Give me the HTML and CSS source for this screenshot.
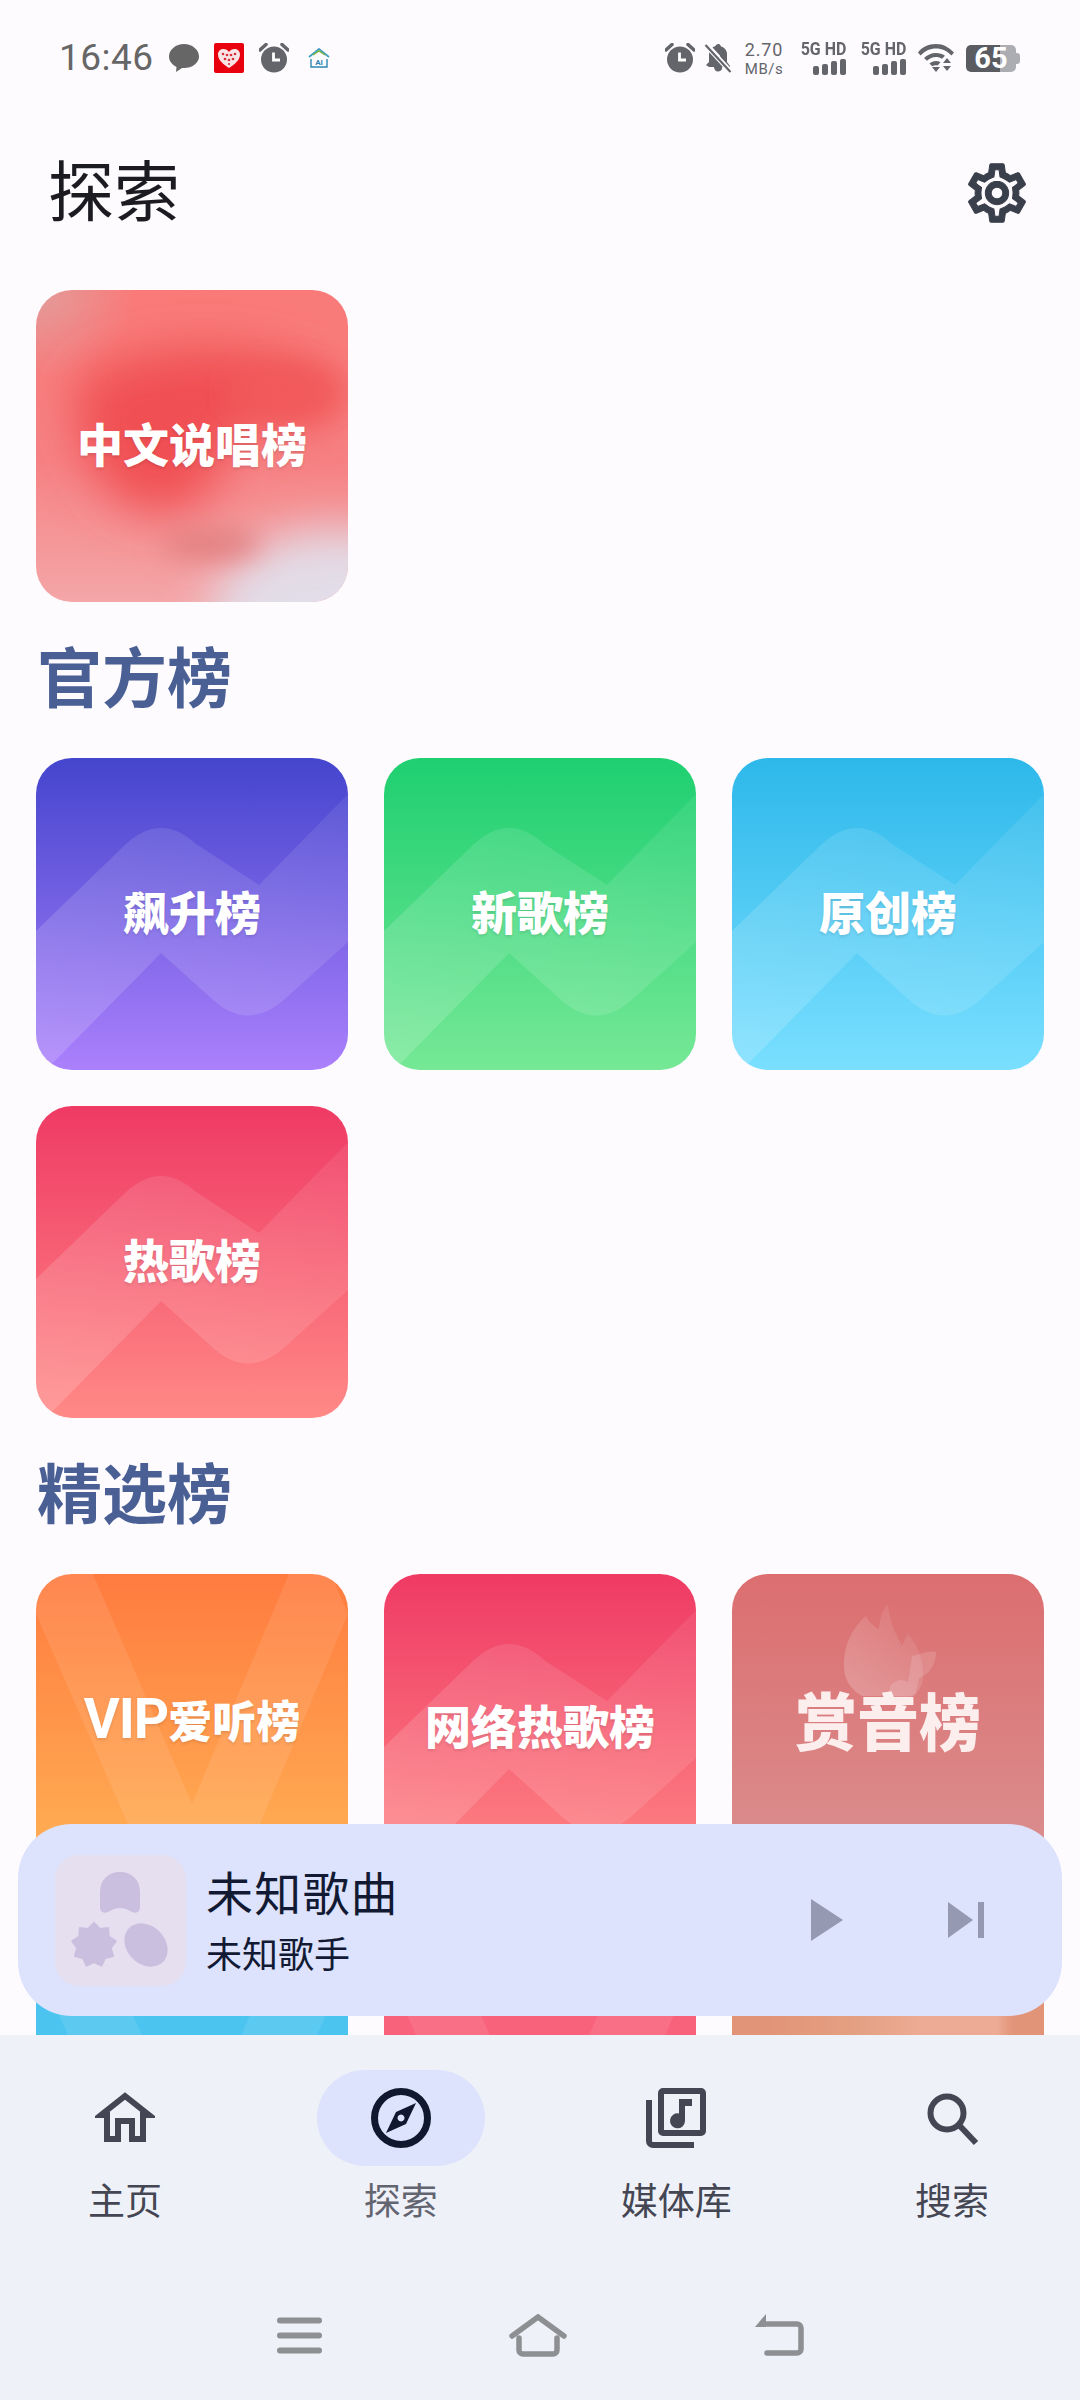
FILE: index.html
```html
<!DOCTYPE html>
<html lang="zh-CN">
<head>
  <meta charset="UTF-8" />
  <meta name="viewport" content="width=device-width, initial-scale=1.0"/>
  <title>探索</title>
  <link rel="stylesheet" href="styles.css">
</head>
<body>
  <svg class="sprite" aria-hidden="true">
    <defs>
      <linearGradient id="bandFade" x1="0" y1="1" x2="1" y2="0">
        <stop offset="0" stop-color="#fff" stop-opacity=".17"/>
        <stop offset="1" stop-color="#fff" stop-opacity=".07"/>
      </linearGradient>
      <linearGradient id="flameFade" x1="0" y1="1" x2="1" y2="0">
        <stop offset="0" stop-color="#fff" stop-opacity=".22"/>
        <stop offset="1" stop-color="#fff" stop-opacity=".04"/>
      </linearGradient>
      <filter id="soft" x="-30%" y="-30%" width="160%" height="160%">
        <feGaussianBlur stdDeviation="24"/>
      </filter>
      <filter id="softer" x="-30%" y="-30%" width="160%" height="160%">
        <feGaussianBlur stdDeviation="14"/>
      </filter>
      <symbol id="wave" viewBox="0 0 312 312">
        <path fill="url(#bandFade)" d="M0 173L90 86Q125 54 160 86L223 127L312 36V184L250 240Q212 275 175 240L125 195L10 312H0Z"/>
      </symbol>
      <symbol id="vee" viewBox="0 0 312 312">
        <path fill="#fff" fill-opacity=".09" d="M16 0H57L156 230L253 0H295L312 40L198 312H119L0 40V10Z"/>
      </symbol>
      <symbol id="alarm" viewBox="0 0 30 30">
        <circle cx="15" cy="16.500" r="13" fill="#63656a"/>
        <path d="M1 7L7 1.500M29 7L23 1.500" stroke="#63656a" stroke-width="3.500" stroke-linecap="round"/>
        <path d="M14.500 9.500V17H21" fill="none" stroke="#fff" stroke-width="2.800"/>
      </symbol>
    </defs>
  </svg>

  <div class="app">
    <header class="status">
      <div class="status-left">
        <span class="time">16:46</span>
        <svg class="ico-30" viewBox="0 0 30 30"><path fill="#666" d="M15 1C7 1 0 6.500 0 13.500c0 4.500 3 8.200 7.500 10.400L7 29l6-4c.7.100 1.300.100 2 .100 8 0 15-5 15-11.600C30 6.500 23 1 15 1z"/></svg>
        <svg class="ico-30" viewBox="0 0 30 30">
          <rect width="30" height="30" rx="2" fill="#e8000f"/>
          <path fill="#fbe4e6" d="M15 25C9 21 4 17 4 11.500 4 8 6.700 6 9.500 6c2.300 0 4.300 1 5.500 3 1.200-2 3.200-3 5.500-3C23.300 6 26 8 26 11.500 26 17 21 21 15 25z"/>
          <g fill="#d6303c"><circle cx="9" cy="11" r="1.300"/><circle cx="13" cy="12" r="1.300"/><circle cx="17" cy="12" r="1.300"/><circle cx="21" cy="11" r="1.300"/><circle cx="11" cy="16" r="1.300"/><circle cx="15" cy="17" r="1.300"/><circle cx="19" cy="16" r="1.300"/><circle cx="15" cy="21" r="1.100"/></g>
        </svg>
        <svg class="ico-30"><use href="#alarm"/></svg>
        <svg class="ico-home" viewBox="0 0 22 20">
          <path d="M1 9L11 1L21 9" fill="none" stroke="#3f9fc0" stroke-width="1.800"/>
          <path d="M5 7L11 3L17 7" fill="none" stroke="#7cb63f" stroke-width="1.500"/>
          <path d="M3 11V19H19V11" fill="none" stroke="#2d86b0" stroke-width="1.400"/>
          <text x="11" y="17" class="ai-text">AI</text>
        </svg>
      </div>
      <div class="status-right">
        <svg class="ico-30"><use href="#alarm"/></svg>
        <svg class="ico-bell" viewBox="0 0 28 30">
          <path fill="#63656a" d="M14 1c1.500 0 2.500 1 2.700 2.400C21 4.500 23 8 23 12v7l3 4v1H5L2 22l3-3v-7c0-1.200.200-2.300.6-3.300L20 24H10c0 2.500 1.800 4.500 4 4.500s4-1.500 4.200-3.500z"/>
          <path d="M2 2L26 28" stroke="#fefbff" stroke-width="5"/>
          <path d="M1.500 2L26.500 29" stroke="#63656a" stroke-width="2.200"/>
          <path fill="#63656a" d="M8.500 4.500C10 3.500 11.500 3 11.500 3 11.800 2 12.800 1 14 1c1.500 0 2.500 1 2.700 2.400C21 4.500 23 8 23 12v8z"/>
        </svg>
        <div class="speed"><span>2.70</span><small>MB/s</small></div>
        <div class="cell">
          <span class="cell-label">5G HD</span>
          <span class="bars"><i></i><i></i><i></i><i></i></span>
        </div>
        <div class="cell">
          <span class="cell-label">5G HD</span>
          <span class="bars"><i></i><i></i><i></i><i></i></span>
        </div>
        <svg class="ico-wifi" viewBox="0 0 37 30">
          <path fill="#63656a" d="M0 9.500C4 4 10 1 18 1s12 3 18 8.500l-2.500 3C29 8 24 5.500 18 5.500S7 8 2.500 12.500z"/>
          <path fill="#63656a" d="M6 15c3-3 7-5 12-5 3.600 0 6.500 1 9 2.800l-3 3c-1.800-1.200-3.800-1.800-6-1.800-3.500 0-6.500 1.300-9 3.800z"/>
          <path fill="#63656a" d="M11.500 20.500c1.800-1.500 4-2.500 6.500-2.500 1.700 0 3.200.400 4.500 1.200l-3 3.300c-1.800-.6-3.800-.3-5.300.8z"/>
          <path fill="#63656a" d="M14 24h8l-4 5zM29 15l4 5h-8zM25 23h8l-4 5z"/>
        </svg>
        <div class="battery"><span>65</span></div>
      </div>
    </header>

    <div class="topbar">
      <h1>探索</h1>
      <svg class="gear" viewBox="0 0 24 24"><path fill="#3a3f4c" stroke="#3a3f4c" stroke-width=".35" d="M19.430 12.980c.04-.32.07-.64.07-.98 0-.34-.03-.66-.07-.98l2.110-1.650c.19-.15.24-.42.12-.64l-2-3.460c-.09-.16-.26-.25-.44-.25-.06 0-.12.01-.17.03l-2.490 1c-.52-.4-1.080-.73-1.690-.98l-.38-2.650C14.460 2.180 14.250 2 14 2h-4c-.25 0-.46.18-.49.42l-.38 2.650c-.61.25-1.170.59-1.690.98l-2.490-1c-.06-.02-.12-.03-.18-.03-.17 0-.34.09-.43.25l-2 3.460c-.13.22-.07.49.12.64l2.110 1.650c-.04.32-.07.65-.07.98 0 .33.03.66.07.98l-2.110 1.650c-.19.15-.24.42-.12.64l2 3.460c.09.16.26.25.44.25.06 0 .12-.01.17-.03l2.490-1c.52.4 1.080.73 1.690.98l.38 2.650c.03.24.24.42.49.42h4c.25 0 .46-.18.49-.42l.38-2.650c.61-.25 1.170-.59 1.690-.98l2.490 1c.06.02.12.03.18.03.17 0 .34-.09.43-.25l2-3.460c.12-.22.07-.49-.12-.64l-2.110-1.650zm-1.980-1.710c.04.31.05.52.05.73 0 .21-.02.43-.05.73l-.14 1.130.89.7 1.080.84-.7 1.210-1.270-.51-1.040-.42-.9.68c-.43.32-.84.56-1.250.73l-1.060.43-.16 1.130-.2 1.350h-1.400l-.19-1.350-.16-1.130-1.060-.43c-.43-.18-.83-.41-1.230-.71l-.91-.7-1.060.43-1.270.51-.7-1.210 1.080-.84.89-.7-.14-1.130c-.03-.31-.05-.54-.05-.74s.02-.43.05-.73l.14-1.130-.89-.7-1.080-.84.7-1.210 1.270.51 1.040.42.9-.68c.43-.32.84-.56 1.250-.73l1.060-.43.16-1.130.2-1.350h1.390l.19 1.350.16 1.130 1.060.43c.43.18.83.41 1.230.71l.91.7 1.060-.43 1.270-.51.7 1.210-1.070.85-.89.7.14 1.130zM12 8c-2.210 0-4 1.790-4 4s1.790 4 4 4 4-1.790 4-4-1.790-4-4-4zm0 6c-1.100 0-2-.9-2-2s.9-2 2-2 2 .9 2 2-.9 2-2 2z"/></svg>
    </div>

    <main class="scroll">
      <div class="grid">
        <a class="card rap">
          <svg class="pattern" viewBox="0 0 312 312">
            <g filter="url(#soft)">
              <path fill="#f05053" d="M50 85C110 50 220 45 300 90C320 125 280 140 240 135C205 130 190 150 180 185C165 230 95 235 65 190C40 150 30 105 50 85Z"/>
              <ellipse fill="#e2dde8" cx="300" cy="320" rx="125" ry="80"/>
            </g>
            <g filter="url(#softer)">
              <ellipse fill="#f25a5a" cx="250" cy="100" rx="55" ry="24"/>
              <ellipse fill="#e07c7d" cx="175" cy="254" rx="50" ry="14"/>
            </g>
          </svg>
          <span>中文说唱榜</span>
        </a>
      </div>

      <h2 class="section-title">官方榜</h2>
      <div class="grid">
        <a class="card purple"><svg class="pattern"><use href="#wave"/></svg><span>飙升榜</span></a>
        <a class="card green"><svg class="pattern"><use href="#wave"/></svg><span>新歌榜</span></a>
        <a class="card sky"><svg class="pattern"><use href="#wave"/></svg><span>原创榜</span></a>
        <a class="card rose"><svg class="pattern"><use href="#wave"/></svg><span>热歌榜</span></a>
      </div>

      <h2 class="section-title">精选榜</h2>
      <div class="grid">
        <a class="card orange raised"><svg class="pattern"><use href="#vee"/></svg><span class="vip-name"><b class="vip">VIP</b>爱听榜</span></a>
        <a class="card rose raised-sm"><svg class="pattern"><use href="#wave"/></svg><span>网络热歌榜</span></a>
        <a class="card salmon raised">
          <svg class="pattern" viewBox="0 0 312 312">
            <path fill="url(#flameFade)" d="M112 92C112 65 125 50 134 42C138 50 143 53 147 55C148 45 150 36 156 31C158 50 164 60 170 72C172 68 174 64 176 60C186 72 192 85 191 105C190 112 186 118 182 122H130C118 115 112 105 112 92Z"/>
            <path fill="#fff" fill-opacity=".14" d="M160 110C166 104 172 106 176 108L180 82C188 80 198 76 204 78C204 90 198 100 187 104L184 118C180 124 170 128 162 124C157 120 156 114 160 110Z"/>
          </svg>
          <span class="big">赏音榜</span>
        </a>
        <a class="card sky-deep"><svg class="pattern"><use href="#vee"/></svg></a>
        <a class="card coral"><svg class="pattern"><use href="#vee"/></svg></a>
        <a class="card peach"></a>
      </div>
    </main>

    <section class="player">
      <div class="art">
        <svg viewBox="0 0 131 131">
          <path fill="#cabfdf" d="M45 37C45 24 54 17 65 17S85 24 85 37V52C85 58 80 59 75 56C69 52 61 52 55 56C50 59 45 58 45 52Z"/>
          <path fill="#cabfdf" stroke="#cabfdf" stroke-width="2" stroke-linejoin="round" d="M39 68L44.800 74L53.100 73.100L53.700 81.500L60.700 86.200L55.700 93L58.100 101L49.900 103L46.500 110.700L39 107L31.500 110.700L28.100 103L19.900 101L22.300 93L17.300 86.200L24.300 81.500L24.900 73.100L33.200 74Z"/>
          <ellipse fill="#cabfdf" cx="91" cy="90" rx="24" ry="19" transform="rotate(45 91 90)"/>
        </svg>
      </div>
      <div class="track">
        <div class="track-title">未知歌曲</div>
        <div class="track-artist">未知歌手</div>
      </div>
      <div class="controls">
        <svg class="ctl-play" viewBox="0 0 32 42"><path fill="#9599b1" d="M0 0L32 21L0 42Z"/></svg>
        <svg class="ctl-next" viewBox="0 0 36 36"><path fill="#9599b1" d="M0 0L25 18L0 36ZM30 0H36V36H30Z"/></svg>
      </div>
    </section>

    <nav class="tabs">
      <a class="tab">
        <span class="tab-icon">
          <svg class="ico-60" viewBox="0 0 60 60"><path fill="none" stroke="#444653" stroke-width="6" d="M37 51V33H23V51H12V27H6L30 8L54 27H48V51Z"/></svg>
        </span>
        <span class="tab-label">主页</span>
      </a>
      <a class="tab active">
        <span class="tab-icon">
          <svg class="ico-60" viewBox="0 0 60 60">
            <circle cx="30" cy="30" r="26.500" fill="none" stroke="#10182f" stroke-width="7"/>
            <path fill="#10182f" fill-rule="evenodd" d="M45 15L35 36L15 45L25 24ZM30 26.500a3.500 3.500 0 1 0 .01 0Z"/>
          </svg>
        </span>
        <span class="tab-label">探索</span>
      </a>
      <a class="tab">
        <span class="tab-icon">
          <svg class="ico-60" viewBox="0 0 60 60">
            <path fill="none" stroke="#444653" stroke-width="6" d="M3 12V53A4 4 0 0 0 7 57H48"/>
            <path fill="#444653" fill-rule="evenodd" d="M17 0H55A5 5 0 0 1 60 5V43A5 5 0 0 1 55 48H17A5 5 0 0 1 12 43V5A5 5 0 0 1 17 0ZM18 6V42H54V6ZM33 11H46V18H39V33A7.500 7.500 0 1 1 33 25.500Z"/>
          </svg>
        </span>
        <span class="tab-label">媒体库</span>
      </a>
      <a class="tab">
        <span class="tab-icon">
          <svg class="ico-60" viewBox="0 0 60 60"><circle cx="25" cy="25" r="16.500" fill="none" stroke="#444653" stroke-width="6"/><path d="M37 37L54 55" stroke="#444653" stroke-width="6"/></svg>
        </span>
        <span class="tab-label">搜索</span>
      </a>
    </nav>

    <footer class="sysnav">
      <svg class="sys-menu" viewBox="0 0 45 37"><path d="M3 3.500H42M3 18.500H42M3 33.500H42" stroke="#8e8f93" stroke-width="6" stroke-linecap="round"/></svg>
      <svg class="sys-home" viewBox="0 0 58 43"><path d="M3 22L29 3L55 22M10 24V36A4 4 0 0 0 14 40H44A4 4 0 0 0 48 36V24" fill="none" stroke="#8e8f93" stroke-width="5.500" stroke-linecap="round"/></svg>
      <svg class="sys-back" viewBox="0 0 49 42"><path d="M12 10H42A4 4 0 0 1 46 14V35A4 4 0 0 1 42 39H12" fill="none" stroke="#8e8f93" stroke-width="5.500" stroke-linecap="round"/><path d="M11 0V13H0Z" fill="#8e8f93"/></svg>
    </footer>
  </div>
</body>
</html>
```

FILE: styles.css
```css
* {
  box-sizing: border-box;
}
body {
  margin: 0;
  background-color: #fefbff;
  font-family: "Noto Sans CJK SC", "Noto Sans", sans-serif;
}
.sprite {
  display: block;
  width: 0;
  height: 0;
}
.app {
  position: relative;
  display: flex;
  flex-direction: column;
  width: 1080px;
  height: 2400px;
  overflow: hidden;
}

/* status bar */
.status {
  flex: none;
  display: flex;
  justify-content: space-between;
  align-items: center;
  height: 116px;
  padding: 0 60px 0 59px;
}
.status-left,
.status-right {
  display: flex;
  align-items: center;
}
.status-left {
  gap: 15px;
}
.status-right {
  gap: 10px;
}
.time {
  width: 95px;
  font-family: Roboto, sans-serif;
  font-size: 37px;
  line-height: 30px;
  color: #666;
  letter-spacing: 0.5px;
}
.ico-30 {
  width: 30px;
  height: 30px;
}
.ico-home {
  width: 22px;
  height: 20px;
  margin-left: 4px;
}
.ai-text {
  font-family: Roboto, sans-serif;
  font-size: 8px;
  font-weight: 700;
  fill: #2d86b0;
  text-anchor: middle;
}
.ico-bell {
  width: 28px;
  height: 30px;
  margin-left: -1px;
}
.speed {
  display: flex;
  flex-direction: column;
  align-items: center;
  width: 40px;
  margin: 0 2px 0 2px;
  font-family: Roboto, sans-serif;
  color: #63656a;
}
.speed span {
  font-size: 18px;
  line-height: 21px;
  letter-spacing: 0.8px;
}
.speed small {
  font-size: 15px;
  line-height: 18px;
  letter-spacing: 0.5px;
}
.cell {
  display: flex;
  flex-direction: column;
  align-items: flex-end;
  width: 50px;
  font-family: Roboto, sans-serif;
}
.cell-label {
  font-size: 19px;
  font-weight: 700;
  line-height: 16px;
  color: #63656a;
  white-space: nowrap;
  transform: scaleX(0.84);
  transform-origin: right center;
}
.bars {
  display: flex;
  align-items: flex-end;
  gap: 3px;
  height: 16px;
  margin-top: 2px;
}
.bars i {
  width: 6px;
  border-radius: 2px;
  background-color: #63656a;
}
.bars i:nth-child(1) { height: 9px; }
.bars i:nth-child(2) { height: 11px; }
.bars i:nth-child(3) { height: 14px; }
.bars i:nth-child(4) { height: 16px; }
.ico-wifi {
  width: 37px;
  height: 30px;
  margin-left: 2px;
}
.battery {
  position: relative;
  width: 50px;
  height: 27px;
  margin-left: 1px;
  margin-right: 4px;
  border-radius: 5px;
  background: linear-gradient(90deg, #5a5c62 0 68%, #acadb2 68% 100%);
  font-family: Roboto, sans-serif;
  font-size: 29px;
  font-weight: 700;
  line-height: 27px;
  text-align: center;
  color: #fff;
}
.battery::after {
  content: "";
  position: absolute;
  top: 8px;
  right: -4px;
  width: 4px;
  height: 11px;
  border-radius: 0 3px 3px 0;
  background-color: #acadb2;
}

/* title row */
.topbar {
  flex: none;
  display: flex;
  justify-content: space-between;
  align-items: center;
  height: 174px;
  padding: 0 48px 26px 48px;
}
.topbar h1 {
  margin: 0 0 6px;
  font-size: 66px;
  font-weight: 400;
  line-height: 1;
  color: #1b1b21;
}
.gear {
  width: 70px;
  height: 70px;
  margin-top: 6px;
}

/* chart grid */
.scroll {
  flex: 1;
  min-height: 0;
  overflow: hidden;
}
.grid {
  display: grid;
  grid-template-columns: repeat(3, 312px);
  gap: 36px;
  padding: 0 36px;
}
.section-title {
  display: flex;
  align-items: center;
  height: 156px;
  margin: 0;
  padding: 0 37px 12px;
  font-size: 65px;
  font-weight: 700;
  color: #4a6095;
}
.card {
  position: relative;
  display: flex;
  justify-content: center;
  align-items: center;
  height: 312px;
  padding-bottom: 9px;
  border-radius: 36px;
  overflow: hidden;
  font-size: 46px;
  font-weight: 900;
  color: #fff;
  text-shadow: 0 2px 3px rgba(0, 0, 0, 0.1);
}
.card span {
  position: relative;
  white-space: nowrap;
}
.pattern {
  position: absolute;
  inset: 0;
  width: 100%;
  height: 100%;
}
.raised {
  padding-bottom: 22px;
}
.raised-sm {
  padding-bottom: 12px;
}
.vip-name {
  font-size: 44px;
}
.vip {
  font-family: Roboto, sans-serif;
  font-size: 55px;
  font-weight: 700;
  letter-spacing: -1px;
}
.big {
  font-size: 62px;
  color: #fdeeee;
  text-shadow: none;
}
.rap {
  background:
    radial-gradient(ellipse 100px 90px at 0 0, rgba(224, 160, 160, 0.9), transparent),
    linear-gradient(180deg, #f97a78 0%, #f68284 55%, #f4a6a8 100%);
}
.purple { background: linear-gradient(180deg, #4445cd, #ab80fc); }
.green { background: linear-gradient(180deg, #1ecf70, #76e896); }
.sky { background: linear-gradient(180deg, #2db8ea, #7adfff); }
.rose { background: linear-gradient(180deg, #ef3a64, #ff8986); }
.orange { background: linear-gradient(180deg, #ff7b3f, #ffb456); }
.salmon { background: linear-gradient(180deg, #dc6e70, #da9191); }
.sky-deep { background: linear-gradient(180deg, #2db8ea, #4cc4f0 30%); }
.coral { background: linear-gradient(180deg, #ef3a64, #f9627b 30%); }
.peach {
  background: linear-gradient(90deg, #e29478 0 12%, #e4a082 40%, #edaa94 60%, #edaa94 85%, #e29478 90%);
}

/* mini player */
.player {
  position: absolute;
  left: 18px;
  top: 1824px;
  display: flex;
  align-items: center;
  width: 1044px;
  height: 192px;
  padding: 0 78px 0 37px;
  border-radius: 54px;
  background-color: #dde2fd;
}
.art {
  flex: none;
  width: 131px;
  height: 131px;
  border-radius: 24px;
  background-color: #e5dff0;
}
.art svg {
  display: block;
  width: 100%;
  height: 100%;
}
.track {
  flex: 1;
  padding-left: 20px;
  color: #121a33;
}
.track-title {
  font-size: 47px;
  line-height: 60px;
  letter-spacing: 1.2px;
}
.track-artist {
  margin-top: 3px;
  font-size: 36px;
  line-height: 56px;
}
.controls {
  display: flex;
  align-items: center;
  gap: 105px;
}
.ctl-play {
  width: 32px;
  height: 42px;
}
.ctl-next {
  width: 36px;
  height: 36px;
}

/* bottom nav */
.tabs {
  flex: none;
  display: flex;
  justify-content: space-between;
  height: 235px;
  padding: 35px 44px 0 41px;
  background-color: #eff1f8;
}
.tab {
  display: flex;
  flex-direction: column;
  align-items: center;
  width: 168px;
}
.tab-icon {
  display: flex;
  justify-content: center;
  align-items: center;
  width: 168px;
  height: 96px;
  border-radius: 48px;
}
.active .tab-icon {
  background-color: #dde2fd;
}
.ico-60 {
  width: 60px;
  height: 60px;
}
.tab-label {
  margin-top: 9px;
  font-size: 37px;
  line-height: 48px;
  color: #444653;
}
.active .tab-label {
  color: #62646f;
}
.sysnav {
  flex: none;
  display: flex;
  justify-content: center;
  align-items: center;
  gap: 187.500px;
  height: 130px;
  background-color: #eff1f8;
}
.sys-menu {
  width: 45px;
  height: 37px;
}
.sys-home {
  width: 58px;
  height: 43px;
}
.sys-back {
  width: 49px;
  height: 42px;
}
```
